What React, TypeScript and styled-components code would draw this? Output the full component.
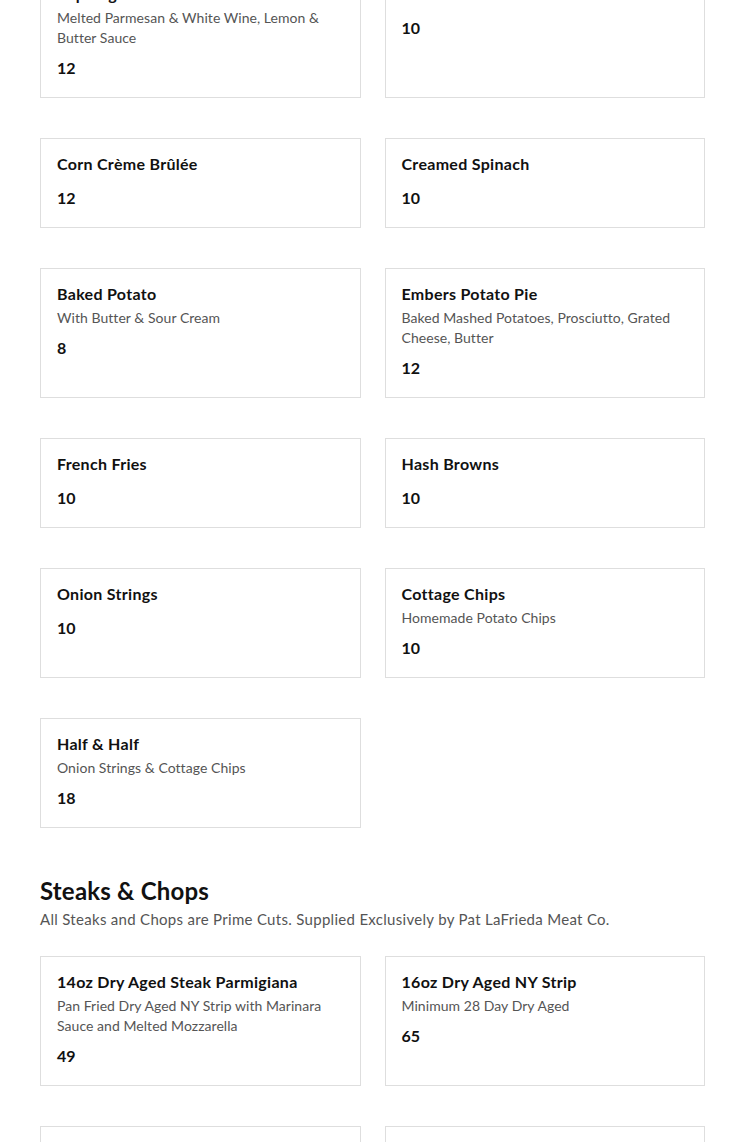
import React from "react";
import styled, { createGlobalStyle } from "styled-components";

const Global = createGlobalStyle`
  html, body { margin: 0; padding: 0; background: #fff; }
  body { font-family: Lato, "Open Sans", Arial, sans-serif; color: #111; -webkit-font-smoothing: antialiased; }
  * { box-sizing: border-box; }
`;

const Page = styled.main`
  margin: -32px 40px 0;
`;

const Section = styled.section`
  display: flex;
  flex-direction: column;
`;

const SectionHead = styled.header`
  margin: 48px 0 24px;
`;

const Heading = styled.h2`
  margin: 0;
  font-size: 24px;
  line-height: 30px;
  font-weight: 700;
  letter-spacing: 0.2px;
  color: #111;
`;

const Sub = styled.p`
  margin: 0;
  font-size: 15px;
  line-height: 26px;
  letter-spacing: 0.3px;
  color: #555;
`;

const Grid = styled.div`
  display: grid;
  grid-template-columns: 1fr 1fr;
  column-gap: 24px;
  row-gap: 40px;
`;

const Card = styled.article`
  border: 1px solid #dedede;
  padding: 15px 16px 19px;
  display: flex;
  flex-direction: column;
`;

const Title = styled.h3`
  margin: 0 0 4px;
  font-size: 16px;
  line-height: 20px;
  font-weight: 700;
  letter-spacing: 0.3px;
  color: #111;
`;

const Desc = styled.p`
  margin: 0;
  font-size: 14px;
  line-height: 20px;
  letter-spacing: 0.05px;
  color: #555;
`;

const Price = styled.div`
  margin-top: 10px;
  font-size: 16px;
  line-height: 20px;
  font-weight: 700;
  color: #111;
`;

type Item = { name: string; desc?: string; price: string };

const sides: Item[] = [
  { name: "Asparagus Fritti", desc: "Melted Parmesan & White Wine, Lemon & Butter Sauce", price: "12" },
  { name: "Sautéed Beans & Escarole", price: "10" },
  { name: "Corn Crème Brûlée", price: "12" },
  { name: "Creamed Spinach", price: "10" },
  { name: "Baked Potato", desc: "With Butter & Sour Cream", price: "8" },
  { name: "Embers Potato Pie", desc: "Baked Mashed Potatoes, Prosciutto, Grated Cheese, Butter", price: "12" },
  { name: "French Fries", price: "10" },
  { name: "Hash Browns", price: "10" },
  { name: "Onion Strings", price: "10" },
  { name: "Cottage Chips", desc: "Homemade Potato Chips", price: "10" },
  { name: "Half & Half", desc: "Onion Strings & Cottage Chips", price: "18" },
];

const steaks: Item[] = [
  { name: "14oz Dry Aged Steak Parmigiana", desc: "Pan Fried Dry Aged NY Strip with Marinara Sauce and Melted Mozzarella", price: "49" },
  { name: "16oz Dry Aged NY Strip", desc: "Minimum 28 Day Dry Aged", price: "65" },
  { name: "Bone-In Rib Eye", desc: "Minimum 28 Day Dry Aged", price: "72" },
  { name: "Filet Mignon", desc: "Center Cut", price: "58" },
];

const MenuCard = ({ item }: { item: Item }) => (
  <Card>
    <Title>{item.name}</Title>
    {item.desc && <Desc>{item.desc}</Desc>}
    <Price>{item.price}</Price>
  </Card>
);

export default function App() {
  return (
    <>
      <Global />
      <Page>
        <Section>
          <Grid>
            {sides.map((it) => (
              <MenuCard key={it.name} item={it} />
            ))}
          </Grid>
        </Section>
        <Section>
          <SectionHead>
            <Heading>Steaks &amp; Chops</Heading>
            <Sub>All Steaks and Chops are Prime Cuts. Supplied Exclusively by Pat LaFrieda Meat Co.</Sub>
          </SectionHead>
          <Grid>
            {steaks.map((it) => (
              <MenuCard key={it.name} item={it} />
            ))}
          </Grid>
        </Section>
      </Page>
    </>
  );
}
